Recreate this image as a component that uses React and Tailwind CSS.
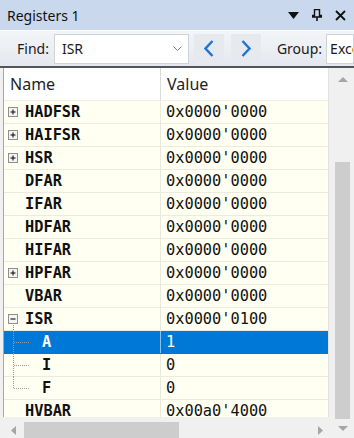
import React from "react";

const rows = [
  { name: "HADFSR", value: "0x0000'0000", kind: "plus" },
  { name: "HAIFSR", value: "0x0000'0000", kind: "plus" },
  { name: "HSR", value: "0x0000'0000", kind: "plus" },
  { name: "DFAR", value: "0x0000'0000" },
  { name: "IFAR", value: "0x0000'0000" },
  { name: "HDFAR", value: "0x0000'0000" },
  { name: "HIFAR", value: "0x0000'0000" },
  { name: "HPFAR", value: "0x0000'0000", kind: "plus" },
  { name: "VBAR", value: "0x0000'0000" },
  { name: "ISR", value: "0x0000'0100", kind: "minus" },
  { name: "A", value: "1", kind: "child", selected: true },
  { name: "I", value: "0", kind: "child" },
  { name: "F", value: "0", kind: "child", last: true },
  { name: "HVBAR", value: "0x00a0'4000" },
];

const mono = { fontFamily: '"DejaVu Sans Mono", "Liberation Mono", monospace' };

function Box({ open }) {
  return (
    <svg width="10" height="10" viewBox="0 0 10 10" className="block">
      <rect x="0.5" y="0.5" width="9" height="9" fill="#f4f4f4" stroke="#8f8f8f" />
      <line x1="2.5" y1="5" x2="7.5" y2="5" stroke="#222" strokeWidth="1.2" />
      {!open && <line x1="5" y1="2.5" x2="5" y2="7.5" stroke="#222" strokeWidth="1.2" />}
    </svg>
  );
}

function NameCell({ row }) {
  if (row.kind === "child") {
    return (
      <div className="flex items-center h-full">
        <svg width="38" height="23" className="block shrink-0">
          <line x1="9.5" y1="0" x2="9.5" y2={row.last ? 11.5 : 23} stroke="#9a9a9a" strokeDasharray="1 1" />
          <line x1="10" y1="11.5" x2="26" y2="11.5" stroke="#9a9a9a" strokeDasharray="1 1" />
        </svg>
        <span className="font-bold">{row.name}</span>
      </div>
    );
  }
  return (
    <div className="flex items-center h-full relative">
      <div className="w-[21px] h-full flex items-center pl-[4px] shrink-0">
        {row.kind === "plus" && <Box />}
        {row.kind === "minus" && <Box open />}
      </div>
      {row.kind === "minus" && (
        <svg width="2" height="7" className="absolute left-[9px] bottom-0">
          <line x1="0.5" y1="0" x2="0.5" y2="7" stroke="#9a9a9a" strokeDasharray="1 1" />
        </svg>
      )}
      <span className="font-bold">{row.name}</span>
    </div>
  );
}

export default function App() {
  return (
    <div
      className="w-[354px] h-[438px] overflow-hidden flex flex-col bg-[#f0f0f0] text-[#1a1a1a]"
      style={{ fontFamily: '"Noto Sans", "Open Sans", sans-serif' }}
    >
      {/* title bar */}
      <div className="h-[30px] shrink-0 flex items-center bg-[#c9d8ec] pl-[7px] pr-[8px] text-[14px] text-[#111]">
        <span className="flex-1">Registers 1</span>
        <div className="flex items-center gap-[13px]">
          <svg width="11" height="7" viewBox="0 0 11 7"><path d="M0 0h11L5.5 7z" fill="#111" /></svg>
          <svg width="10" height="12" viewBox="0 0 10 12">
            <path d="M2.5 0.5h5v6h2v1.5H0.5V6.5h2z" fill="none" stroke="#111" strokeWidth="1.4" />
            <line x1="5" y1="8" x2="5" y2="12" stroke="#111" strokeWidth="1.6" />
          </svg>
          <svg width="11" height="11" viewBox="0 0 11 11">
            <path d="M1 1l9 9M10 1l-9 9" stroke="#111" strokeWidth="1.8" />
          </svg>
        </div>
      </div>

      {/* toolbar */}
      <div className="h-[36px] shrink-0 flex items-center bg-gradient-to-b from-[#f3f5f8] to-[#e4e8ee] border-t border-[#f8fafc] text-[14px]">
        <span className="ml-[17px] mr-[5px]">Find:</span>
        <div className="w-[135px] h-[30px] bg-white border border-[#cfd3d8] flex items-center pl-[7px] pr-[6px]">
          <span className="flex-1">ISR</span>
          <svg width="9" height="6" viewBox="0 0 9 6"><path d="M0.5 0.5L4.5 4.5L8.5 0.5" fill="none" stroke="#777" /></svg>
        </div>
        <div className="ml-[5px] w-[30px] h-[30px] flex items-center justify-center bg-[#e6e9ee]">
          <svg width="10" height="17" viewBox="0 0 10 17"><path d="M8.5 1L1.5 8.5L8.5 16" fill="none" stroke="#1b74d6" strokeWidth="2.4" /></svg>
        </div>
        <div className="ml-[7px] w-[30px] h-[30px] flex items-center justify-center bg-[#e6e9ee]">
          <svg width="10" height="17" viewBox="0 0 10 17"><path d="M1.5 1L8.5 8.5L1.5 16" fill="none" stroke="#1b74d6" strokeWidth="2.4" /></svg>
        </div>
        <span className="ml-[16px] mr-[4px]">Group:</span>
        <div className="flex-1 h-[30px] bg-white border border-[#cfd3d8] flex items-center pl-[3px] overflow-hidden whitespace-nowrap">
          Exce
        </div>
      </div>

      <div className="h-[2px] shrink-0 bg-[#50565c]" />

      {/* grid + scrollbars */}
      <div className="flex-1 flex min-h-0">
        <div className="flex-1 flex flex-col min-w-0 pl-[3px]">
          <div className="flex-1 flex flex-col min-h-0 overflow-hidden border-l border-[#a8a8a8] border-r border-r-[#e2e2e2] bg-[#fffff2]">
            <div className="h-[33px] shrink-0 flex bg-white text-[16px] text-[#1e1e1e] border-b border-[#f0f0e4]">
              <div className="w-[157px] border-r border-[#dadada] flex items-center pl-[6px]">Name</div>
              <div className="flex-1 flex items-center pl-[6px]">Value</div>
            </div>
            {rows.map((row) => (
              <div
                key={row.name}
                className={
                  "h-[23px] shrink-0 flex text-[15.3px] border-b " +
                  (row.selected ? "bg-[#0078d7] text-white border-[#0078d7]" : "border-[#ebebe0] text-[#111]")
                }
                style={mono}
              >
                <div className={"w-[157px] border-r " + (row.selected ? "border-[#8cc0ee]" : "border-[#e8e8dc]")}>
                  <NameCell row={row} />
                </div>
                <div className="flex-1 flex items-center pl-[5px]">{row.value}</div>
              </div>
            ))}
          </div>
          {/* horizontal scrollbar */}
          <div className="h-[21px] shrink-0 flex items-end">
            <div className="w-[21px] h-[16px] flex items-center justify-center">
              <svg width="5" height="9" viewBox="0 0 5 9"><path d="M5 0v9L0 4.5z" fill="#a6a6a6" /></svg>
            </div>
            <div className="w-[155px] h-[16px] bg-[#cdcdcd]" />
            <div className="flex-1" />
            <div className="w-[17px] h-[16px] flex items-center justify-center">
              <svg width="5" height="9" viewBox="0 0 5 9"><path d="M0 0v9L5 4.5z" fill="#a6a6a6" /></svg>
            </div>
          </div>
        </div>
        {/* vertical scrollbar */}
        <div className="w-[25px] shrink-0 flex flex-col items-center pl-[2px]">
          <div className="h-[20px] flex items-center justify-center mt-[1px]">
            <svg width="10" height="5" viewBox="0 0 10 5"><path d="M0 5h10L5 0z" fill="#a6a6a6" /></svg>
          </div>
          <div className="h-[73px]" />
          <div className="w-[15px] h-[257px] bg-[#cdcdcd]" />
          <div className="flex-1 flex items-center justify-center">
            <svg width="10" height="5" viewBox="0 0 10 5"><path d="M0 0h10L5 5z" fill="#a6a6a6" /></svg>
          </div>
        </div>
      </div>
    </div>
  );
}
